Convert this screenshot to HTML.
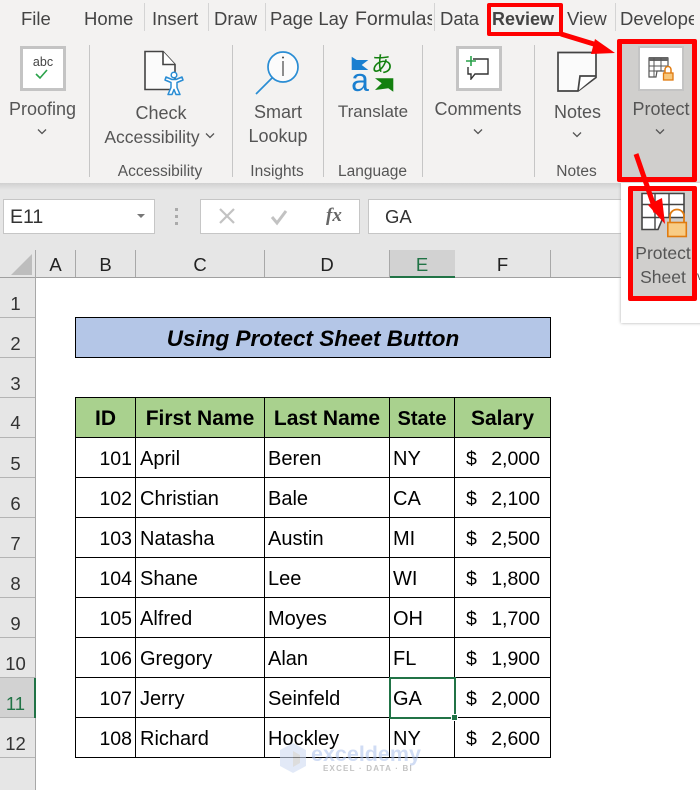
<!DOCTYPE html>
<html><head><meta charset="utf-8">
<style>
html,body{margin:0;padding:0;background:#fff}
#p{position:relative;width:700px;height:790px;overflow:hidden;background:#fff;font-family:"Liberation Sans",sans-serif;color:#111}
#p div,#p span.t{position:absolute;white-space:nowrap}
.tab{font-size:18.5px;color:#444;top:6px;line-height:26px}
.rb{font-size:18px;color:#555;line-height:24px;text-align:center}
.gl{font-size:15.5px;color:#555;line-height:20px;text-align:center;top:162px}
.sep{width:1px;background:#c6c6c6;top:45px;height:132px}
.tsep{width:1px;background:#d4d4d4;top:3px;height:28px}
.ch{font-size:18.5px;color:#222;top:252px;line-height:26px;text-align:center}
.cv{width:1px;background:#a8a8a8;top:250px;height:27px}
.rn{left:0;width:31px;text-align:center;font-size:18.5px;color:#333;line-height:24px}
.rl{left:0;width:35px;height:1px;background:#b4b4b4}
.c{font-size:20px;line-height:24px;color:#000}
.n{font-size:19.5px}
.h{font-size:21px;font-weight:bold;line-height:24px;color:#000;text-align:center;top:407px}
.hl{left:75px;width:476px;height:1px;background:#000}
.vl{width:1px;background:#000;top:398px;height:360px}
</style></head><body><div id="p">

<!-- ribbon -->
<div style="left:0;top:0;width:700px;height:183px;background:#f3f2f1"></div>
<div style="left:0;top:183px;width:700px;height:7px;background:linear-gradient(#d0d0d0,#e6e6e6)"></div>
<div style="left:0;top:190px;width:700px;height:60px;background:#e6e6e6"></div>

<span class="t tab" style="left:21px">File</span>
<span class="t tab" style="left:84px">Home</span>
<span class="t tab" style="left:152px">Insert</span>
<span class="t tab" style="left:214px">Draw</span>
<span class="t tab" style="left:270px;width:78px;overflow:hidden">Page Layout</span>
<span class="t tab" style="left:355px;width:77px;overflow:hidden;font-size:19.5px">Formulas</span>
<span class="t tab" style="left:440px">Data</span>
<span class="t tab" style="left:492px;font-weight:bold;color:#444;font-size:18px">Review</span>
<span class="t tab" style="left:567px">View</span>
<span class="t tab" style="left:620px;width:74px;overflow:hidden">Developer</span>
<div class="tsep" style="left:144px"></div><div class="tsep" style="left:208px"></div><div class="tsep" style="left:265px"></div><div class="tsep" style="left:434px"></div><div class="tsep" style="left:615px"></div>

<div class="sep" style="left:89px"></div><div class="sep" style="left:232px"></div><div class="sep" style="left:323px"></div><div class="sep" style="left:422px"></div><div class="sep" style="left:534px"></div>

<!-- protect highlight -->
<div style="left:620px;top:42px;width:77px;height:136px;background:#d0cfcd"></div>

<!-- proofing -->
<div style="left:20px;top:46px;width:46px;height:45px;border:3px solid #c4c4c4;background:#fff;box-sizing:border-box"></div>
<span class="t" style="left:20px;top:54px;width:46px;text-align:center;font-size:12.500px;color:#444;line-height:16px">abc</span>
<svg style="position:absolute;left:34px;top:69px" width="16" height="12"><path d="M2 5l4 4 7-8" fill="none" stroke="#2aa24a" stroke-width="1.6"/></svg>
<div class="rb" style="left:0;width:85px;top:97px">Proofing</div>
<svg style="position:absolute;left:36px;top:128px" width="12" height="8"><path d="M2 1.5l4 4 4-4" fill="none" stroke="#555" stroke-width="1.3"/></svg>

<!-- accessibility -->
<svg style="position:absolute;left:140px;top:48px" width="48" height="50">
<path d="M5 3.500h18l12 13v25H5z" fill="#fbfbfb" stroke="#444" stroke-width="1.6"/><path d="M23 3.500v13h12" fill="#fff" stroke="#444" stroke-width="1.6"/>
<path d="M25 32l6 2.500v5l-3 7h4l2-5 2 5h4l-3-7v-5l6-2.500-1-3-6 2.500h-4l-6-2.500z" fill="#fff" stroke="#2a8dd4" stroke-width="1.5" stroke-linejoin="round"/>
<circle cx="34" cy="27" r="2.800" fill="#fff" stroke="#2a8dd4" stroke-width="1.5"/></svg>
<div class="rb" style="left:90px;width:142px;top:101px">Check</div>
<div class="rb" style="left:96px;width:112px;top:125px;font-size:17.500px">Accessibility</div>
<svg style="position:absolute;left:204px;top:132px" width="12" height="8"><path d="M2 1.5l4 4 4-4" fill="none" stroke="#555" stroke-width="1.3"/></svg>
<div class="gl" style="left:90px;width:140px">Accessibility</div>

<!-- smart lookup -->
<svg style="position:absolute;left:250px;top:48px" width="52" height="50">
<circle cx="33" cy="19" r="15" fill="#fbfbfb" stroke="#2a8dd4" stroke-width="1.7"/><path d="M22 30L6 46" stroke="#2a8dd4" stroke-width="1.7"/><path d="M33 13v15" stroke="#444" stroke-width="1.2"/><circle cx="33" cy="9.500" r="1" fill="#444"/></svg>
<div class="rb" style="left:233px;width:90px;top:100px">Smart</div>
<div class="rb" style="left:233px;width:90px;top:124px">Lookup</div>
<div class="gl" style="left:233px;width:88px">Insights</div>

<!-- translate -->
<svg style="position:absolute;left:350px;top:50px" width="46" height="46">
<path d="M1.700 6.700L6.700 10H18.300L11.700 15 18.300 20H1.700z" fill="#1a7fd0"/>
<path d="M25 28.300H43.300V41.700L38.300 38.300 25 40 31.700 33.300z" fill="#13800f"/></svg>
<span class="t" style="left:350px;top:61px;width:20px;text-align:center;font:32px/38px 'Liberation Sans',sans-serif;color:#1a7fd0">a</span>
<span class="t" style="left:371px;top:50px;font:22px/26px 'Noto Sans CJK JP',sans-serif;color:#13800f">あ</span>
<div class="rb" style="left:325px;width:96px;top:100px;font-size:17px">Translate</div>
<div class="gl" style="left:325px;width:95px">Language</div>

<!-- comments -->
<div style="left:456px;top:46px;width:46px;height:45px;background:#fff;border:3px solid #c4c4c4;box-sizing:border-box"></div>
<svg style="position:absolute;left:464px;top:54px" width="30" height="26"><path d="M9 5h15v15H11l-4 5v-5H4v-7" fill="none" stroke="#333" stroke-width="1.4"/><path d="M7 2v10M2 7h10" stroke="#2aa24a" stroke-width="1.6"/></svg>
<div class="rb" style="left:424px;width:108px;top:97px">Comments</div>
<svg style="position:absolute;left:472px;top:128px" width="12" height="8"><path d="M2 1.5l4 4 4-4" fill="none" stroke="#555" stroke-width="1.3"/></svg>

<!-- notes -->
<svg style="position:absolute;left:556px;top:50px" width="44" height="44"><path d="M2 2.500h38v25L22 41H2z" fill="#fbfbfb" stroke="#444" stroke-width="1.7"/><path d="M40 26H24l-2 15" fill="#fff" stroke="#444" stroke-width="1.7"/></svg>
<div class="rb" style="left:535px;width:85px;top:100px">Notes</div>
<svg style="position:absolute;left:571px;top:131px" width="12" height="8"><path d="M2 1.5l4 4 4-4" fill="none" stroke="#555" stroke-width="1.3"/></svg>
<div class="gl" style="left:535px;width:83px">Notes</div>

<!-- protect -->
<div style="left:638px;top:46px;width:46px;height:45px;background:#fff;border:2px solid #c4c4c4;box-sizing:border-box"></div>
<svg style="position:absolute;left:648px;top:56px" width="28" height="26">
<path d="M1 2h19v13H9l-1 6H1z" fill="#fff" stroke="#555" stroke-width="1.2"/><path d="M1 1h19v4H1z" fill="#666"/><path d="M1 10h19M1 15h9M6 2v19M13 2v13" stroke="#555" stroke-width="1"/>
<path d="M17 17v-3.500a3 3 0 016 0V17" fill="#fff" stroke="#e07b10" stroke-width="1.5"/><rect x="15.500" y="17" width="9.500" height="7" fill="#f7c77c" stroke="#e07b10" stroke-width="1.3"/></svg>
<div class="rb" style="left:620px;width:82px;top:97px">Protect</div>
<svg style="position:absolute;left:654px;top:128px" width="12" height="8"><path d="M2 1.5l4 4 4-4" fill="none" stroke="#555" stroke-width="1.3"/></svg>

<!-- formula bar -->
<div style="left:3px;top:199px;width:152px;height:35px;background:#fff;border:1px solid #c6c6c6;box-sizing:border-box"></div>
<span class="t" style="left:10px;top:205px;font-size:19.500px;line-height:24px;color:#333">E11</span>
<div style="left:137px;top:214px;width:0;height:0;border-left:4px solid transparent;border-right:4px solid transparent;border-top:4px solid #777"></div>
<div style="left:175px;top:208px;width:3px;height:3px;background:#aaa"></div><div style="left:175px;top:215px;width:3px;height:3px;background:#aaa"></div><div style="left:175px;top:222px;width:3px;height:3px;background:#aaa"></div>
<div style="left:200px;top:199px;width:160px;height:35px;background:#fff;border:1px solid #c6c6c6;box-sizing:border-box"></div>
<svg style="position:absolute;left:218px;top:207px" width="76" height="20"><path d="M2 2l14 14M16 2L2 16" stroke="#c2c2c2" stroke-width="2.2"/><path d="M54 10l5 6 9-12" fill="none" stroke="#c2c2c2" stroke-width="3"/></svg>
<span class="t" style="left:326px;top:204px;font:italic bold 19px 'Liberation Serif',serif;line-height:24px;color:#666">fx</span>
<div style="left:368px;top:199px;width:340px;height:35px;background:#fff;border:1px solid #c6c6c6;box-sizing:border-box"></div>
<span class="t" style="left:385px;top:205px;font-size:18.5px;line-height:24px;color:#333">GA</span>

<!-- col headers -->
<div style="left:0;top:250px;width:700px;height:27px;background:#e6e6e6"></div>
<div style="left:0;top:277px;width:36px;height:513px;background:#e6e6e6"></div>
<div style="left:0;top:277px;width:700px;height:1px;background:#a0a0a0"></div>
<div style="left:35px;top:250px;width:1px;height:540px;background:#a8a8a8"></div>
<svg style="position:absolute;left:10px;top:252px" width="24" height="24"><path d="M22 2v21H1z" fill="#bdbdbd"/></svg>
<div class="cv" style="left:75px"></div><div class="cv" style="left:135px"></div><div class="cv" style="left:264px"></div><div class="cv" style="left:389px"></div><div class="cv" style="left:454px"></div><div class="cv" style="left:550px"></div>
<div style="left:390px;top:250px;width:65px;height:27px;background:#d2d2d2"></div>
<div style="left:390px;top:276px;width:65px;height:2px;background:#217346"></div>
<div class="ch" style="left:36px;width:39px">A</div><div class="ch" style="left:76px;width:59px">B</div><div class="ch" style="left:136px;width:128px">C</div><div class="ch" style="left:265px;width:124px">D</div><div class="ch" style="left:390px;width:64px;color:#217346">E</div><div class="ch" style="left:455px;width:95px">F</div>

<!-- row headers -->
<div class="rl" style="top:317px"></div><div class="rl" style="top:357px"></div><div class="rl" style="top:397px"></div><div class="rl" style="top:437px"></div><div class="rl" style="top:477px"></div><div class="rl" style="top:517px"></div><div class="rl" style="top:557px"></div><div class="rl" style="top:597px"></div><div class="rl" style="top:637px"></div><div class="rl" style="top:677px"></div><div class="rl" style="top:717px"></div><div class="rl" style="top:757px"></div>
<div style="left:0;top:678px;width:36px;height:39px;background:#d2d2d2"></div>
<div style="left:34px;top:678px;width:2px;height:40px;background:#217346"></div>
<div class="rn" style="top:292px">1</div><div class="rn" style="top:332px">2</div><div class="rn" style="top:372px">3</div><div class="rn" style="top:411px">4</div><div class="rn" style="top:452px">5</div><div class="rn" style="top:492px">6</div><div class="rn" style="top:532px">7</div><div class="rn" style="top:572px">8</div><div class="rn" style="top:612px">9</div><div class="rn" style="top:652px">10</div><div class="rn" style="top:692px;color:#217346">11</div><div class="rn" style="top:732px">12</div>

<!-- title -->
<div style="left:75px;top:317px;width:476px;height:41px;background:#b4c6e7;border:1px solid #000;box-sizing:border-box"></div>
<div style="left:75px;top:327px;width:476px;text-align:center;font:italic bold 22.500px/24px 'Liberation Sans',sans-serif;color:#000">Using Protect Sheet Button</div>

<!-- table -->
<div style="left:75px;top:398px;width:476px;height:40px;background:#a9d18e"></div>
<div class="hl" style="top:397px"></div><div class="hl" style="top:437px"></div><div class="hl" style="top:477px"></div><div class="hl" style="top:517px"></div><div class="hl" style="top:557px"></div><div class="hl" style="top:597px"></div><div class="hl" style="top:637px"></div><div class="hl" style="top:677px"></div><div class="hl" style="top:717px"></div><div class="hl" style="top:757px"></div>
<div class="vl" style="left:75px"></div><div class="vl" style="left:135px"></div><div class="vl" style="left:264px"></div><div class="vl" style="left:389px"></div><div class="vl" style="left:454px"></div><div class="vl" style="left:550px"></div>

<div class="h" style="left:76px;width:59px">ID</div><div class="h" style="left:136px;width:128px">First Name</div><div class="h" style="left:265px;width:124px">Last Name</div><div class="h" style="left:390px;width:64px;font-size:20px">State</div><div class="h" style="left:455px;width:95px">Salary</div>

<!--ROWS-->
<div class="c n" style="left:76px;width:56px;text-align:right;top:447px">101</div><div class="c" style="left:140px;top:447px">April</div><div class="c" style="left:268px;top:447px">Beren</div><div class="c" style="left:393px;top:447px">NY</div><div class="c n" style="left:466px;top:447px">$</div><div class="c n" style="left:480px;width:60px;text-align:right;top:447px">2,000</div>
<div class="c n" style="left:76px;width:56px;text-align:right;top:487px">102</div><div class="c" style="left:140px;top:487px">Christian</div><div class="c" style="left:268px;top:487px">Bale</div><div class="c" style="left:393px;top:487px">CA</div><div class="c n" style="left:466px;top:487px">$</div><div class="c n" style="left:480px;width:60px;text-align:right;top:487px">2,100</div>
<div class="c n" style="left:76px;width:56px;text-align:right;top:527px">103</div><div class="c" style="left:140px;top:527px">Natasha</div><div class="c" style="left:268px;top:527px">Austin</div><div class="c" style="left:393px;top:527px">MI</div><div class="c n" style="left:466px;top:527px">$</div><div class="c n" style="left:480px;width:60px;text-align:right;top:527px">2,500</div>
<div class="c n" style="left:76px;width:56px;text-align:right;top:567px">104</div><div class="c" style="left:140px;top:567px">Shane</div><div class="c" style="left:268px;top:567px">Lee</div><div class="c" style="left:393px;top:567px">WI</div><div class="c n" style="left:466px;top:567px">$</div><div class="c n" style="left:480px;width:60px;text-align:right;top:567px">1,800</div>
<div class="c n" style="left:76px;width:56px;text-align:right;top:607px">105</div><div class="c" style="left:140px;top:607px">Alfred</div><div class="c" style="left:268px;top:607px">Moyes</div><div class="c" style="left:393px;top:607px">OH</div><div class="c n" style="left:466px;top:607px">$</div><div class="c n" style="left:480px;width:60px;text-align:right;top:607px">1,700</div>
<div class="c n" style="left:76px;width:56px;text-align:right;top:647px">106</div><div class="c" style="left:140px;top:647px">Gregory</div><div class="c" style="left:268px;top:647px">Alan</div><div class="c" style="left:393px;top:647px">FL</div><div class="c n" style="left:466px;top:647px">$</div><div class="c n" style="left:480px;width:60px;text-align:right;top:647px">1,900</div>
<div class="c n" style="left:76px;width:56px;text-align:right;top:687px">107</div><div class="c" style="left:140px;top:687px">Jerry</div><div class="c" style="left:268px;top:687px">Seinfeld</div><div class="c" style="left:393px;top:687px">GA</div><div class="c n" style="left:466px;top:687px">$</div><div class="c n" style="left:480px;width:60px;text-align:right;top:687px">2,000</div>
<div class="c n" style="left:76px;width:56px;text-align:right;top:727px">108</div><div class="c" style="left:140px;top:727px">Richard</div><div class="c" style="left:268px;top:727px">Hockley</div><div class="c" style="left:393px;top:727px">NY</div><div class="c n" style="left:466px;top:727px">$</div><div class="c n" style="left:480px;width:60px;text-align:right;top:727px">2,600</div>

<!-- selected cell -->
<div style="left:389px;top:677px;width:67px;height:42px;border:2px solid #217346;box-sizing:border-box"></div>
<div style="left:451px;top:714px;width:7px;height:7px;background:#217346;border:1px solid #fff;box-sizing:border-box"></div>

<!-- watermark -->
<svg style="position:absolute;left:278px;top:742px;opacity:.6" width="30" height="32"><path d="M15 1l13 7v16l-13 7-13-7V8z" fill="#cfdcf3"/><path d="M15 9l7 4v8l-7 4z" fill="#c8c8c8"/></svg>
<span class="t" style="left:311px;top:741px;font:bold 21.500px/26px 'Liberation Sans',sans-serif;color:rgba(170,192,235,.55)">exceldemy</span>
<span class="t" style="left:323px;top:763px;font:bold 8px/12px 'Liberation Sans',sans-serif;letter-spacing:1.2px;color:rgba(170,170,170,.7)">EXCEL · DATA · BI</span>

<!-- dropdown -->
<div style="left:621px;top:183px;width:82px;height:140px;background:#fff;box-shadow:0 0 3px #aaa"></div>
<div style="left:631px;top:188px;width:65px;height:110px;background:#d0cfcd"></div>
<svg style="position:absolute;left:640px;top:192px" width="52" height="48">
<path d="M2 1.500h42v24H23l-5 12H2z" fill="#fff" stroke="#444" stroke-width="1.6"/><path d="M2 12.500h42M2 25.500h21M15 1.500v36M29 1.500v24" stroke="#444" stroke-width="1.4" fill="none"/>
<path d="M30 31v-7a7 6.500 0 0114 0v7" fill="none" stroke="#e07b10" stroke-width="1.8"/><rect x="27.800" y="30.500" width="18.500" height="14" fill="#f8cc85" stroke="#e07b10" stroke-width="1.6"/></svg>
<div class="rb" style="left:628px;width:70px;top:241px;font-size:17.500px">Protect</div>
<div class="rb" style="left:628px;width:70px;top:265px;font-size:17.500px">Sheet</div>
<span class="t" style="left:697px;top:270px;font-size:12px;color:#555;line-height:12px">v</span>

<!-- red annotations -->
<div style="left:487px;top:3px;width:76px;height:33px;border:4px solid #f00;border-radius:2px;box-sizing:border-box"></div>
<div style="left:617px;top:39px;width:80px;height:143px;border:5px solid #f00;border-radius:2px;box-sizing:border-box"></div>
<div style="left:628px;top:186px;width:69px;height:115px;border:5px solid #f00;border-radius:2px;box-sizing:border-box"></div>
<svg style="position:absolute;left:0;top:0" width="700" height="790">
<path d="M561 34L597 45" stroke="#f00" stroke-width="5"/><path d="M615 53L595 39 591 54z" fill="#f00"/>
<path d="M636 154L656 212" stroke="#f00" stroke-width="5"/><path d="M665 224L648 205 662 198z" fill="#f00"/>
</svg>
</div></body></html>
